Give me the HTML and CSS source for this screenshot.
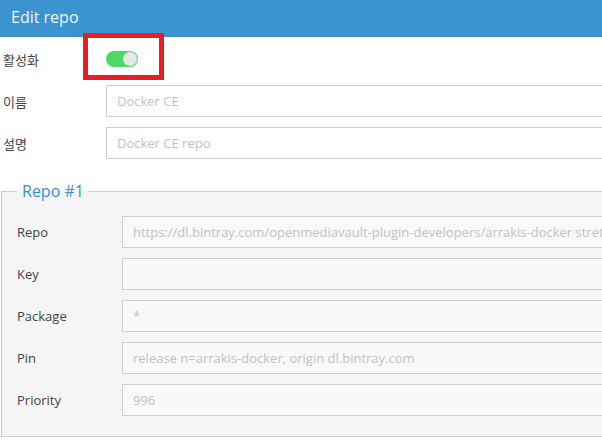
FILE: index.html
```html
<!DOCTYPE html>
<html>
<head>
<meta charset="utf-8">
<link rel="stylesheet" href="styles.css">
</head>
<body>
<div class="viewport">
<div class="page">
  <div class="header">Edit repo</div>
  <div class="form">
    <div class="row">
      <div class="label">활성화</div>
      <div class="field">
        <span class="toggle"><span class="knob"></span><span class="mark"></span></span>
      </div>
    </div>
    <div class="row">
      <div class="label">이름</div>
      <div class="field"><input class="input" placeholder="Docker CE"></div>
    </div>
    <div class="row">
      <div class="label">설명</div>
      <div class="field"><input class="input" placeholder="Docker CE repo"></div>
    </div>
    <fieldset class="group">
      <legend class="legend">Repo #1</legend>
      <div class="row sub">
        <div class="label">Repo</div>
        <div class="field"><input class="input" placeholder="https://dl.bintray.com/openmediavault-plugin-developers/arrakis-docker stretch"></div>
      </div>
      <div class="row sub">
        <div class="label">Key</div>
        <div class="field"><input class="input"></div>
      </div>
      <div class="row sub">
        <div class="label">Package</div>
        <div class="field"><input class="input" placeholder="*"></div>
      </div>
      <div class="row sub">
        <div class="label">Pin</div>
        <div class="field"><input class="input" placeholder="release n=arrakis-docker, origin dl.bintray.com"></div>
      </div>
      <div class="row sub">
        <div class="label">Priority</div>
        <div class="field"><input class="input" placeholder="996"></div>
      </div>
    </fieldset>
  </div>
</div>
</div>
</body>
</html>
```
FILE: styles.css
```css
html, body {
  margin: 0;
  padding: 0;
  overflow: hidden;
  background: #fff;
}
body {
  font-family: "Open Sans", "Noto Sans CJK KR", sans-serif;
  font-size: 13px;
  color: #444;
}
.viewport {
  width: 602px;
  height: 446px;
  overflow: hidden;
}
.page {
  width: 720px;
}
.header {
  height: 37px;
  background: #3b94cf;
  color: #eef5fb;
  font-size: 16px;
  line-height: 35px;
  padding-left: 11px;
}
.form {
  padding-top: 6px;
  display: flex;
  flex-direction: column;
  gap: 10px;
}
.row {
  display: flex;
  align-items: center;
  height: 32px;
  padding-left: 3px;
}
.label {
  width: 103px;
  flex: none;
  font-family: "Open Sans", "Noto Sans CJK KR", sans-serif;
  color: #444;
}
.field {
  flex: 1;
  display: flex;
  align-items: center;
  height: 32px;
}
.input {
  box-sizing: border-box;
  width: 100%;
  height: 32px;
  border: 1px solid #cfcfcf;
  background: #fff;
  padding: 0 10px;
  font-family: "Open Sans", sans-serif;
  font-size: 13px;
  color: #444;
  outline: none;
  margin: 0;
}
.input::placeholder {
  color: #c2c2c2;
}
.toggle {
  position: relative;
  display: block;
  width: 32px;
  height: 16px;
  border-radius: 8px;
  background: #4cd964;
}
.knob {
  position: absolute;
  right: 1px;
  top: 1px;
  width: 14px;
  height: 14px;
  border-radius: 50%;
  background: #e8e8e8;
}
.mark {
  position: absolute;
  left: -23px;
  top: -18px;
  width: 81px;
  height: 47px;
  box-sizing: border-box;
  border: 5px solid #ea1c24;
}
.group {
  margin: 12px 0 0 1px;
  padding: 15px 0 20px 15px;
  border: 1px solid #cccccc;
  background: #f5f5f5;
  display: flex;
  flex-direction: column;
  gap: 10px;
  min-width: 0;
}
.legend {
  padding: 0 5px;
  font-size: 16px;
  line-height: 20px;
  color: #3b8fcd;
}
.row.sub {
  padding-left: 0;
}
.row.sub .label {
  width: 105px;
}
.row.sub .input {
  background: #f9f9f9;
}
```
